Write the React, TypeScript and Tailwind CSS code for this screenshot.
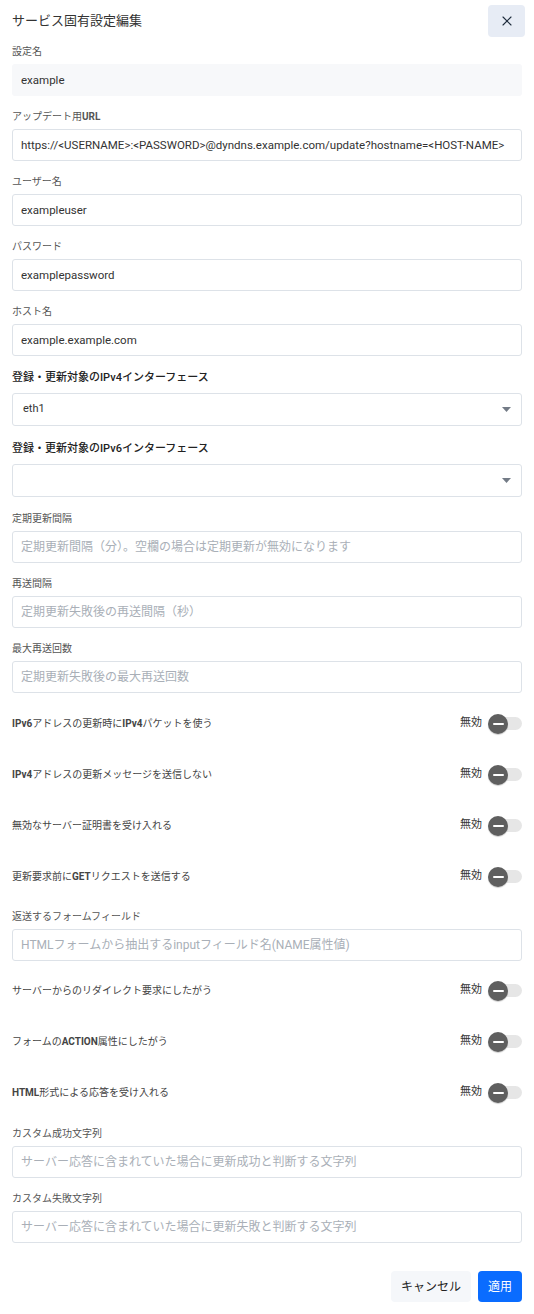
import { X } from 'lucide-react';
import type { ReactNode } from 'react';

const font = { fontFamily: 'Roboto, "Noto Sans CJK JP", sans-serif' };

function Label({ children }: { children: ReactNode }) {
  return <div className="text-[10px] leading-[14px] text-[#555] mb-[5px]">{children}</div>;
}

function TextField({
  label,
  value,
  placeholder,
  readOnly,
  className = '',
}: {
  label: ReactNode;
  value?: string;
  placeholder?: string;
  readOnly?: boolean;
  className?: string;
}) {
  return (
    <div className={className}>
      <Label>{label}</Label>
      <input
        readOnly
        defaultValue={value}
        placeholder={placeholder}
        className={
          'w-full h-8 px-2 text-[11.5px] text-[#333] placeholder:text-[12px] placeholder:text-[#a9afb7] rounded-[3px] outline-none ' +
          (readOnly ? 'bg-[#f7f8fa] border border-transparent' : 'bg-white border border-[#dde2e8]')
        }
        style={font}
      />
    </div>
  );
}

function SelectField({ label, value, className = '' }: { label: string; value?: string; className?: string }) {
  return (
    <div className={className}>
      <div className="text-[11px] leading-[16px] font-medium text-[#222] mb-[7px]">{label}</div>
      <div className="h-[33px] pl-[10px] pr-[10px] flex items-center justify-between border border-[#dde2e8] rounded-[3px] bg-white">
        <span className="text-[11px] text-[#333]">{value}</span>
        <svg width="9" height="5" viewBox="0 0 9 5">
          <path d="M0 0h9L4.5 5z" fill="#737b86" />
        </svg>
      </div>
    </div>
  );
}

function ToggleRow({ children }: { children: ReactNode }) {
  return (
    <div className="h-[51px] flex items-center justify-between">
      <div className="text-[10px] text-[#444]">{children}</div>
      <div className="flex items-center">
        <span className="text-[11px] text-[#333] mr-[6px]">無効</span>
        <div className="relative w-[34px] h-5 flex items-center">
          <div className="ml-[4px] w-[30px] h-[13px] rounded-full bg-[#e6e6e6]" />
          <div className="absolute left-0 top-0 w-5 h-5 rounded-full bg-[#5f5f5f] flex items-center justify-center shadow-[0_1px_1px_rgba(0,0,0,0.2)]">
            <div className="w-[11px] h-[2px] bg-white rounded-full" />
          </div>
        </div>
      </div>
    </div>
  );
}

export default function App() {
  return (
    <div className="w-[534px] min-h-[1314px] bg-white px-3 pb-3 flex flex-col" style={font}>
      <div className="pt-[5px] h-[37px] flex items-center justify-between">
        <h1 className="text-[13px] text-[#333] font-normal">サービス固有設定編集</h1>
        <button className="w-[37px] h-8 rounded-[4px] bg-[#e7ecf5] flex items-center justify-center text-[#1f2d3d] -mr-[3px]">
          <X size={16} strokeWidth={1.7} />
        </button>
      </div>

      <TextField className="mt-[8px]" label="設定名" value="example" readOnly />
      <TextField
        className="mt-[14px]"
        label={<>アップデート用<b className="font-bold">URL</b></>}
        value="https://<USERNAME>:<PASSWORD>@dyndns.example.com/update?hostname=<HOST-NAME>"
      />
      <TextField className="mt-[14px]" label="ユーザー名" value="exampleuser" />
      <TextField className="mt-[14px]" label="パスワード" value="examplepassword" />
      <TextField className="mt-[14px]" label="ホスト名" value="example.example.com" />

      <SelectField className="mt-[14px]" label="登録・更新対象のIPv4インターフェース" value="eth1" />
      <SelectField className="mt-[15px]" label="登録・更新対象のIPv6インターフェース" />

      <TextField className="mt-[15px]" label="定期更新間隔" placeholder="定期更新間隔（分）。空欄の場合は定期更新が無効になります" />
      <TextField className="mt-[14px]" label="再送間隔" placeholder="定期更新失敗後の再送間隔（秒）" />
      <TextField className="mt-[14px]" label="最大再送回数" placeholder="定期更新失敗後の最大再送回数" />

      <div className="mt-[5px]">
        <ToggleRow><b className="font-bold">IPv6</b>アドレスの更新時に<b className="font-bold">IPv4</b>パケットを使う</ToggleRow>
        <ToggleRow><b className="font-bold">IPv4</b>アドレスの更新メッセージを送信しない</ToggleRow>
        <ToggleRow>無効なサーバー証明書を受け入れる</ToggleRow>
        <ToggleRow>更新要求前に<b className="font-bold">GET</b>リクエストを送信する</ToggleRow>
      </div>

      <TextField className="mt-[8px]" label="返送するフォームフィールド" placeholder="HTMLフォームから抽出するinputフィールド名(NAME属性値)" />

      <div className="mt-[4px]">
        <ToggleRow>サーバーからのリダイレクト要求にしたがう</ToggleRow>
        <ToggleRow>フォームの<b className="font-bold">ACTION</b>属性にしたがう</ToggleRow>
        <ToggleRow><b className="font-bold">HTML</b>形式による応答を受け入れる</ToggleRow>
      </div>

      <TextField className="mt-[9px]" label="カスタム成功文字列" placeholder="サーバー応答に含まれていた場合に更新成功と判断する文字列" />
      <TextField className="mt-[14px]" label="カスタム失敗文字列" placeholder="サーバー応答に含まれていた場合に更新失敗と判断する文字列" />

      <div className="mt-[28px] flex justify-end gap-[7px]">
        <button className="h-[31px] px-[10px] rounded-[4px] bg-[#f5f7fa] text-[12px] text-[#222]">キャンセル</button>
        <button className="h-[31px] px-[10px] rounded-[4px] bg-[#0a6cff] text-[12px] text-white">適用</button>
      </div>
    </div>
  );
}
